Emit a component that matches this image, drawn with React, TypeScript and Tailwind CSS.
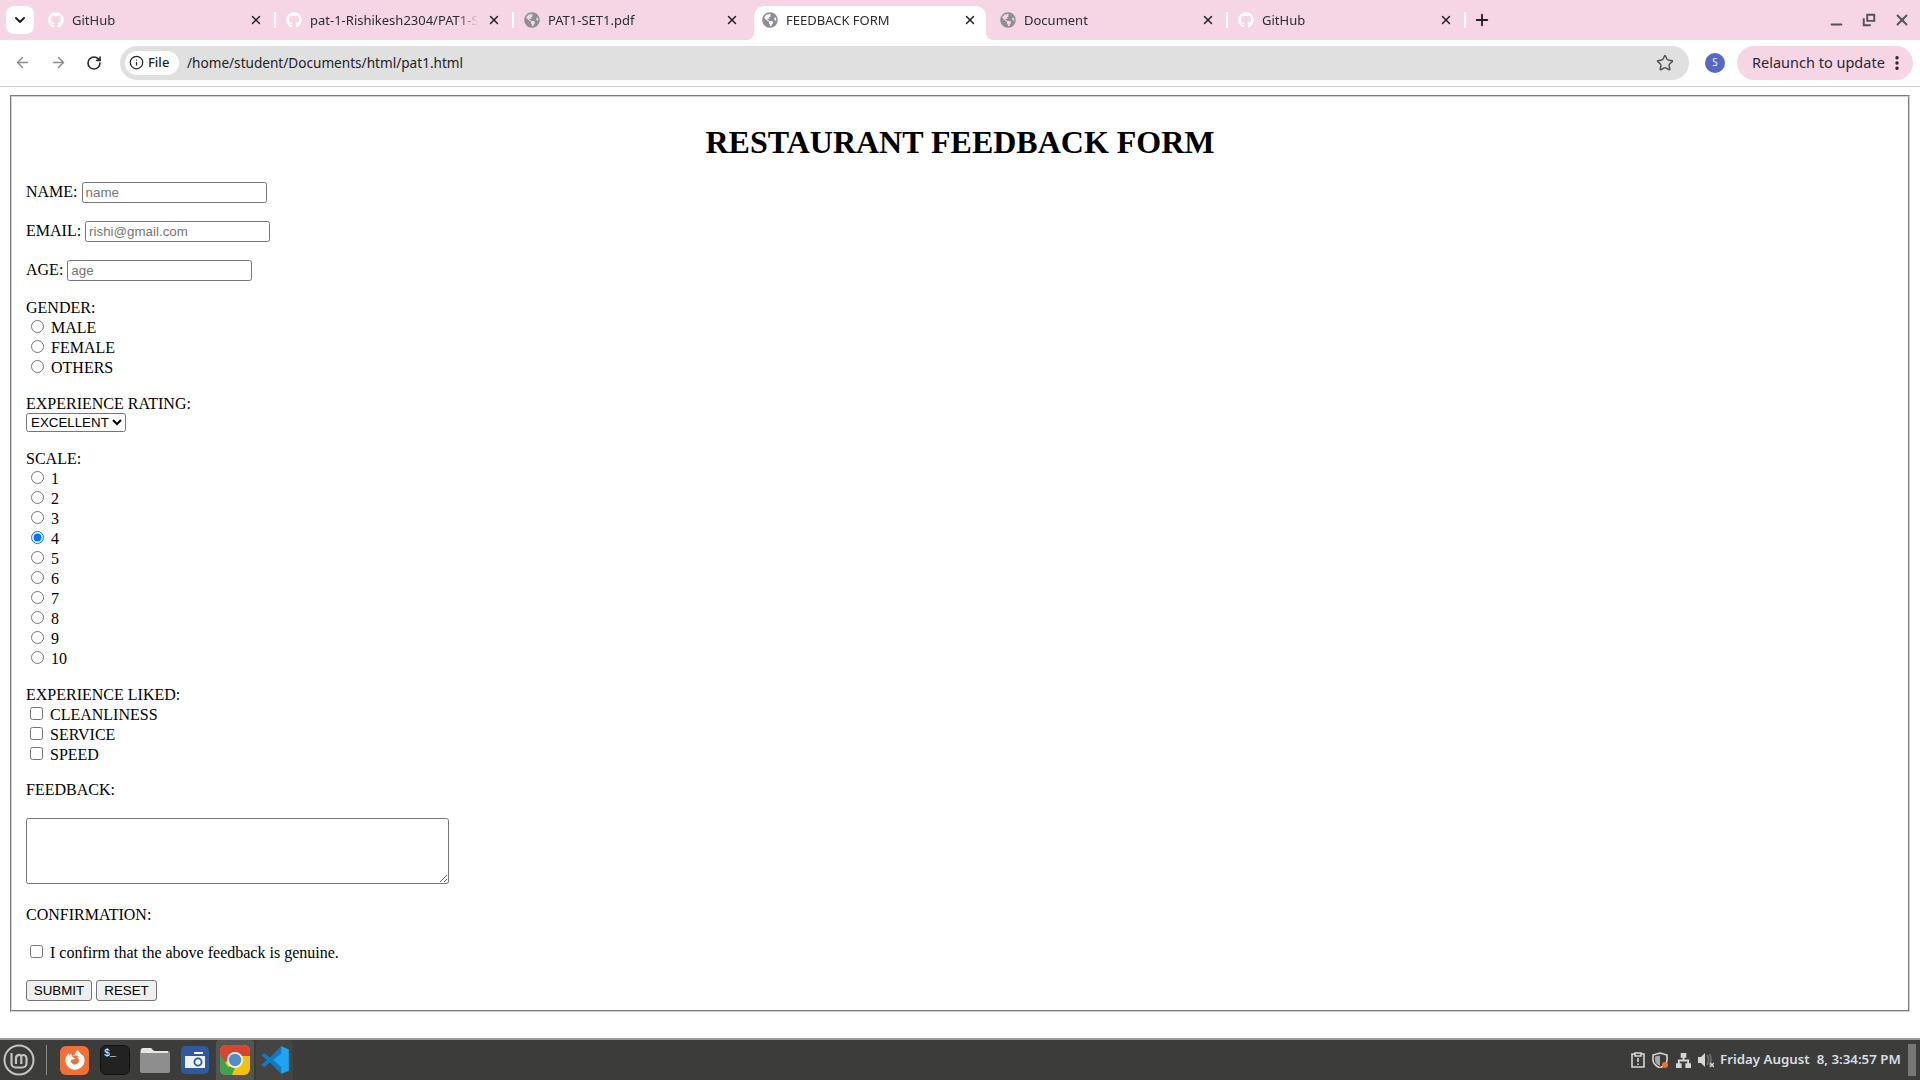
import { ArrowLeft, ArrowRight, ChevronDown, Info, Minus, MoreVertical, Plus, RotateCw, Star, X } from "lucide-react";
import { FaFirefoxBrowser, FaGithub, FaGlobeAmericas } from "react-icons/fa";

const TABS = [
  { title: "GitHub", icon: "github" },
  { title: "pat-1-Rishikesh2304/PAT1-SET1", icon: "github" },
  { title: "PAT1-SET1.pdf", icon: "globe" },
  { title: "FEEDBACK FORM", icon: "globe", active: true },
  { title: "Document", icon: "globe" },
  { title: "GitHub", icon: "github" },
];

function Tab({ title, icon, active }: { title: string; icon: string; active?: boolean }) {
  return (
    <div className="relative w-[238px] h-[34px] shrink-0">
      {active && (
        <>
          <div className="absolute left-[3px] right-[3px] top-0 bottom-0 bg-white rounded-t-[10px]" />
          <div className="absolute left-[-5px] bottom-0 w-2 h-2 bg-[radial-gradient(circle_at_0_0,transparent_8px,white_8px)]" />
          <div className="absolute right-[-5px] bottom-0 w-2 h-2 bg-[radial-gradient(circle_at_100%_0,transparent_8px,white_8px)]" />
        </>
      )}
      <div className="relative h-full flex items-center pl-[11px] pr-[12px] pb-[6px]">
        {icon === "github" ? (
          <FaGithub className="w-4 h-4 shrink-0 text-white" />
        ) : (
          <FaGlobeAmericas className="w-4 h-4 shrink-0 text-[#8e8e96]" />
        )}
        <span className="ml-[8px] pt-[1px] w-[168px] overflow-hidden whitespace-nowrap text-[13px] text-[#2c2c30] [mask-image:linear-gradient(to_right,black_88%,transparent)]">
          {title}
        </span>
        <X className="ml-auto w-3.5 h-3.5 text-[#222]" strokeWidth={2.5} />
      </div>
    </div>
  );
}

function TabSep({ hidden }: { hidden?: boolean }) {
  return <div className={`w-0.5 h-4 -mx-px shrink-0 z-10 -translate-y-[3px] ${hidden ? "bg-transparent" : "bg-white"}`} />;
}

function BrowserChrome() {
  return (
    <div className="shrink-0 font-['Noto_Sans',sans-serif]">
      <div className="h-10 bg-[#f6d6e5] flex items-end relative">
        <div className="absolute left-[6px] top-[6px] w-[28px] h-[28px] bg-white rounded-lg flex items-center justify-center">
          <ChevronDown className="w-4 h-4 text-[#222]" strokeWidth={3} />
        </div>
        <div className="ml-[37px] flex items-center">
          {TABS.map((t, i) => (
            <div key={i} className="flex items-center">
              <Tab title={t.title} icon={t.icon} active={t.active} />
              <TabSep hidden={i === 2 || i === 3} />
            </div>
          ))}
          <Plus className="ml-[8px] w-[18px] h-[18px] text-[#222] -translate-y-[3px]" strokeWidth={2.5} />
        </div>
        <div className="absolute right-[9px] top-[11px] flex items-center gap-[17px] text-[#55505a]">
          <Minus className="w-[17px] h-[17px] translate-y-[4px]" strokeWidth={2.5} />
          <svg viewBox="0 0 16 16" className="w-[14px] h-[14px]" fill="none" stroke="currentColor" strokeWidth="2.2">
            <path d="M6 2h8v7H6zM2 6v8h8" />
          </svg>
          <X className="w-[18px] h-[18px]" strokeWidth={2.5} />
        </div>
      </div>
      <div className="h-[47px] pb-[1px] bg-white border-b border-[#cfcfcf] rounded-tl-lg rounded-tr-lg flex items-center">
        <ArrowLeft className="ml-[14px] w-[17px] h-[17px] text-[#8b8b8b]" strokeWidth={2} />
        <ArrowRight className="ml-[19px] w-[17px] h-[17px] text-[#8b8b8b]" strokeWidth={2} />
        <RotateCw className="ml-[19px] w-[16px] h-[16px] text-[#2a2a2a]" strokeWidth={2.4} />
        <div className="ml-[18px] w-[1569px] h-[34px] rounded-full bg-[#e0e0e0] flex items-center pl-[5px]">
          <div className="w-[54px] h-6 bg-white rounded-full flex items-center pl-[4px] gap-[4px]">
            <Info className="w-[15px] h-[15px] text-[#222]" strokeWidth={2} />
            <span className="text-[13px] font-medium text-[#222]">File</span>
          </div>
          <span className="ml-[8px] pt-[1px] text-[13.6px] text-[#222]">/home/student/Documents/html/pat1.html</span>
          <Star className="ml-auto mr-[15px] w-[18px] h-[18px] text-[#555]" strokeWidth={2} />
        </div>
        <div className="ml-[16px] w-5 h-5 rounded-full bg-[#5468c4] flex items-center justify-center text-[10px] text-white">S</div>
        <div className="ml-[12px] w-[176px] h-[34px] rounded-full bg-[#f6d6e5] flex items-center pl-[15px]">
          <span className="text-[14.5px] text-[#2b2730] whitespace-nowrap">Relaunch to update</span>
          <MoreVertical className="ml-auto mr-[7px] w-[18px] h-[18px] text-[#222]" strokeWidth={2.5} />
        </div>
      </div>
    </div>
  );
}

function Choice({ type, label, checked }: { type: "radio" | "checkbox"; label: string; checked?: boolean }) {
  return (
    <div>
      <input
        type={type}
        defaultChecked={checked}
        className={type === "radio" ? "appearance-auto mt-[3px] mr-[3px] mb-0 ml-[5px]" : "appearance-auto mt-[3px] mr-[3px] mb-[3px] ml-[4px]"}
      />{" "}
      {label}
    </div>
  );
}

const inputCls =
  "appearance-auto w-[185px] h-[21px] border border-[#767676] rounded-[2.5px] px-[3px] font-['Liberation_Sans',sans-serif] text-[13.33px] placeholder:text-[#757575] align-baseline";

function FeedbackForm() {
  return (
    <div className="flex-1 min-h-0 px-[10px] pt-[8px] bg-white">
      <form className="h-[917px] border-2 [border-style:groove] border-[#d0d0d0] pl-[14px] pr-[14px] pt-[27px] font-['Liberation_Serif',serif] text-base leading-[normal] text-black">
        <h1 className="text-center text-[32px] font-bold leading-[37px] mb-[21px]">RESTAURANT FEEDBACK FORM</h1>
        <div className="mb-[18px]">
          NAME: <input className={inputCls} placeholder="name" />
        </div>
        <div className="mb-[18px]">
          EMAIL: <input className={inputCls} placeholder="rishi@gmail.com" />
        </div>
        <div className="mb-[18px]">
          AGE: <input className={inputCls} placeholder="age" />
        </div>
        <div className="mb-[18px]">
          <div>GENDER:</div>
          {["MALE", "FEMALE", "OTHERS"].map((g) => (
            <Choice key={g} type="radio" label={g} />
          ))}
        </div>
        <div className="mb-[18px]">
          <div>EXPERIENCE RATING:</div>
          <select className="appearance-auto block w-[100px] h-[19px] border border-[#767676] rounded-[2.5px] font-['Liberation_Sans',sans-serif] text-[13.33px] bg-white">
            <option>EXCELLENT</option>
            <option>GOOD</option>
            <option>AVERAGE</option>
            <option>POOR</option>
          </select>
        </div>
        <div className="mb-[18px]">
          <div>SCALE:</div>
          {Array.from({ length: 10 }, (_, i) => (
            <Choice key={i} type="radio" label={String(i + 1)} checked={i === 3} />
          ))}
        </div>
        <div className="mb-[17px]">
          <div>EXPERIENCE LIKED:</div>
          {["CLEANLINESS", "SERVICE", "SPEED"].map((c) => (
            <Choice key={c} type="checkbox" label={c} />
          ))}
        </div>
        <div className="mb-[19px]">FEEDBACK:</div>
        <textarea className="appearance-auto block w-[423px] h-[66px] border border-[#767676] rounded-[2.5px] mb-[22px]" />
        <div className="mb-[18px]">CONFIRMATION:</div>
        <Choice type="checkbox" label="I confirm that the above feedback is genuine." />
        <div className="mt-[18px] flex gap-[4px]">
          <button type="button" className="h-[21px] w-[66px] bg-[#efefef] border border-[#767676] rounded-[3px] font-['Liberation_Sans',sans-serif] text-[13.33px]">
            SUBMIT
          </button>
          <button type="button" className="h-[21px] w-[61px] bg-[#efefef] border border-[#767676] rounded-[3px] font-['Liberation_Sans',sans-serif] text-[13.33px]">
            RESET
          </button>
        </div>
      </form>
    </div>
  );
}

function ChromeIcon() {
  return (
    <svg viewBox="0 0 30 30" className="w-[30px] h-[30px]">
      <rect width="30" height="30" rx="6" fill="#f4c20d" />
      <path d="M6 0h18a6 6 0 0 1 6 6v5H15L4 18 0 11V6a6 6 0 0 1 6-6z" fill="#d9432f" />
      <path d="M0 9l8 13 8-2-4 10H6a6 6 0 0 1-6-6z" fill="#3fa34d" />
      <circle cx="15" cy="15" r="8" fill="#f2f2f2" />
      <circle cx="15" cy="15" r="6.2" fill="#4f8ec9" />
    </svg>
  );
}

function Taskbar() {
  return (
    <div className="h-[42px] shrink-0 bg-[#3c3d3a] border-t-2 border-[#9a9a9a] flex items-center relative">
      <svg viewBox="0 0 32 32" className="ml-[3px] w-[32px] h-[32px]" fill="none" stroke="#c4c4c4">
        <circle cx="16" cy="16" r="14.5" strokeWidth="2" />
        <path d="M8.5 9v10.5a4 4 0 0 0 4 4h7a4 4 0 0 0 4-4V14a3 3 0 0 0-5.2-2 3 3 0 0 0-5.3 2v6M18.3 12v8" strokeWidth="2.2" />
      </svg>
      <div className="ml-[11px] w-[1px] h-[30px] bg-[#8a8a88]" />
      <div className="ml-[13px] w-[29px] h-[29px] rounded-md bg-[#f36f35] flex items-center justify-center">
        <FaFirefoxBrowser className="w-5 h-5 text-white" />
      </div>
      <div className="ml-[11px] w-[30px] h-[30px] rounded-md bg-[#222] border border-[#111] text-white text-[10px] leading-none pl-[3px] pt-[3px] font-['Liberation_Mono',monospace]">
        $_
      </div>
      <svg viewBox="0 0 30 26" className="ml-[10px] w-[30px] h-[26px]">
        <path d="M0 4a2 2 0 0 1 2-2h9l3 2h14a2 2 0 0 1 2 2v18a2 2 0 0 1-2 2H2a2 2 0 0 1-2-2z" fill="#8e8e8e" />
        <path d="M1 5V3a2 2 0 0 1 2-2h8l3 3h14v2H1z" fill="#e6e6e6" />
      </svg>
      <svg viewBox="0 0 28 28" className="ml-[11px] w-[28px] h-[28px]">
        <rect width="28" height="28" rx="5" fill="#2f5a9e" />
        <path d="M4 10h20v12H4z" fill="#eef2f7" />
        <path d="M13 6h9v2h-9z" fill="#fff" />
        <circle cx="17" cy="16" r="3.6" fill="#eef2f7" stroke="#2f5a9e" strokeWidth="1.8" />
      </svg>
      <div className="ml-[7px] w-[38px] h-[40px] bg-[#545553] rounded-t-sm flex items-center justify-center">
        <ChromeIcon />
      </div>
      <div className="ml-[2px] w-[37px] h-[40px] bg-[#444542] rounded-t-sm flex items-center justify-center">
        <svg viewBox="0 0 24 24" className="w-[30px] h-[30px]">
          <path d="M17 1 8 10 3.5 6.5 1 8l4.5 4L1 16l2.5 1.5L8 14l9 9 6-2.5V3.5z" fill="#0f7bc4" />
          <path d="M17 1l6 2.5v17L17 23zM17 6.5 10.5 12l6.5 5.5z" fill="#22a3ee" fillRule="evenodd" />
        </svg>
      </div>
      <div className="ml-auto flex items-center text-[#d6d6d6]">
        <svg viewBox="0 0 14 16" className="w-[14px] h-[16px]" fill="none" stroke="currentColor" strokeWidth="1.6">
          <path d="M4 2H1v13h12V2h-3M4 1h6v3H4zM7 6v4M7 11.5v1.6" />
        </svg>
        <svg viewBox="0 0 16 16" className="ml-[7px] w-[16px] h-[16px]">
          <path d="M8 1l7 2v5c0 4-3 6-7 8-4-2-7-4-7-8V3z" fill="none" stroke="currentColor" strokeWidth="1.6" />
          <path d="M8 3.5V14c-3-1.5-5-3-5-6V4.5z" fill="#a9a9a9" />
          <circle cx="13" cy="13" r="3" fill="#f0702c" />
        </svg>
        <svg viewBox="0 0 16 16" className="ml-[8px] w-[15px] h-[15px]" fill="currentColor">
          <path d="M5 0h6v5H9v2h5v4h2v5h-6v-5h2V9H4v2h2v5H0v-5h2V7h5V5H5z" />
        </svg>
        <svg viewBox="0 0 16 16" className="ml-[7px] w-[16px] h-[16px]" fill="currentColor">
          <path d="M0 5h3l4-4v14l-4-4H0z" />
          <path d="M9 3c2 3 2 7 0 10M11.5 2c2 3 2 9 0 12" fill="none" stroke="#777" strokeWidth="1.4" />
          <path d="M12 11l4 4m0-4l-4 4" stroke="currentColor" strokeWidth="1.5" />
        </svg>
        <span className="ml-[6px] w-[181px] whitespace-pre font-['Noto_Sans',sans-serif] text-[13.3px] font-semibold text-[#d8dde2]">Friday August  8, 3:34:57 PM</span>
        <div className="ml-[7px] mr-[4px] w-2 h-8 bg-[#777876]" />
      </div>
    </div>
  );
}

export default function App() {
  return (
    <div className="w-[1920px] h-[1080px] flex flex-col overflow-hidden bg-white">
      <BrowserChrome />
      <FeedbackForm />
      <Taskbar />
    </div>
  );
}
